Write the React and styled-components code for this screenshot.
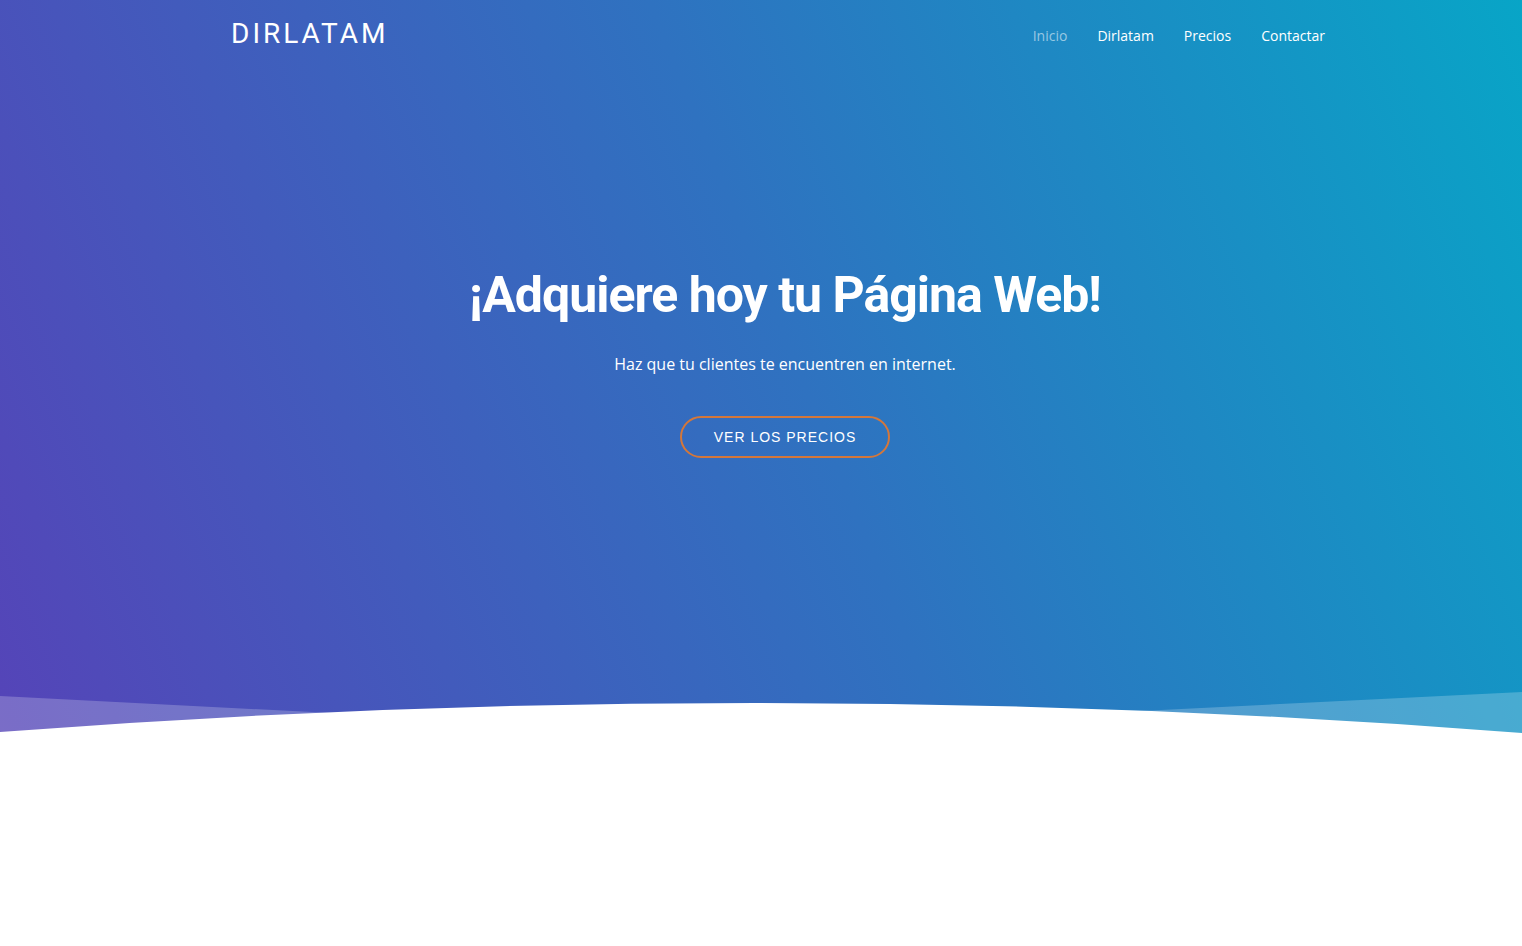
import styled, { createGlobalStyle } from "styled-components";

const GlobalStyle = createGlobalStyle`
  html, body {
    margin: 0;
    padding: 0;
    background: #fff;
  }
  body {
    font-family: "Open Sans", sans-serif;
  }
`;

const links = ["Inicio", "Dirlatam", "Precios", "Contactar"];

export default function App() {
  return (
    <>
      <GlobalStyle />
      <Hero>
        <Header>
          <Logo>DIRLATAM</Logo>
          <Nav>
            {links.map((l, i) => (
              <NavLink key={l} $active={i === 0}>{l}</NavLink>
            ))}
          </Nav>
        </Header>

        <HeroBody>
          <Title>¡Adquiere hoy tu Página Web!</Title>
          <Subtitle>Haz que tu clientes te encuentren en internet.</Subtitle>
          <PriceBtn>VER LOS PRECIOS</PriceBtn>
        </HeroBody>

        <Wave viewBox="0 0 1522 50" preserveAspectRatio="none">
          <path d="M0 10 L400 30.6 L400 50 L0 50 Z" fill="#fff" fillOpacity="0.22" />
          <path d="M1522 6 L1080 28 L1080 50 L1522 50 Z" fill="#fff" fillOpacity="0.22" />
          <path d="M0 46 Q761 -12.5 1522 47 L1522 50 L0 50 Z" fill="#fff" />
        </Wave>
      </Hero>
      <Below />
    </>
  );
}

const Hero = styled.section`
  height: 736px;
  display: flex;
  flex-direction: column;
  background: linear-gradient(68deg, #5544b8 0%, #2f72c0 52%, #08a5c7 100%);
`;

const Header = styled.header`
  display: flex;
  justify-content: space-between;
  align-items: center;
  padding: 14px 197px 0 231px;
  height: 38px;
`;

const Logo = styled.div`
  font-family: Roboto, sans-serif;
  font-size: 28px;
  font-weight: 400;
  letter-spacing: 3px;
  color: #fff;
`;

const Nav = styled.nav`
  display: flex;
  gap: 30px;
  padding-top: 4px;
`;

const NavLink = styled.a`
  font-family: "Open Sans", sans-serif;
  font-size: 14px;
  color: ${(p) => (p.$active ? "rgba(255,255,255,0.55)" : "#fff")};
  cursor: pointer;
`;

const HeroBody = styled.div`
  display: flex;
  flex-direction: column;
  align-items: center;
  padding: 213px 0 0 48px;
`;

const Title = styled.h1`
  margin: 0;
  font-family: Roboto, sans-serif;
  font-weight: 700;
  font-size: 50px;
  line-height: 60px;
  letter-spacing: -1px;
  color: #fff;
`;

const Subtitle = styled.p`
  margin: 27px 0 0;
  font-family: "Open Sans", sans-serif;
  font-size: 16px;
  line-height: 24px;
  color: #fff;
`;

const PriceBtn = styled.button`
  margin-top: 40px;
  width: 210px;
  height: 42px;
  border: 2px solid #d4773a;
  border-radius: 21px;
  background: transparent;
  color: #fff;
  font-family: "Liberation Sans", Arial, sans-serif;
  font-size: 14px;
  letter-spacing: 1px;
  cursor: pointer;
`;

const Wave = styled.svg`
  display: block;
  width: 100%;
  height: 50px;
  margin-top: auto;
`;

const Below = styled.div`
  height: 210px;
  background: #fff;
`;
